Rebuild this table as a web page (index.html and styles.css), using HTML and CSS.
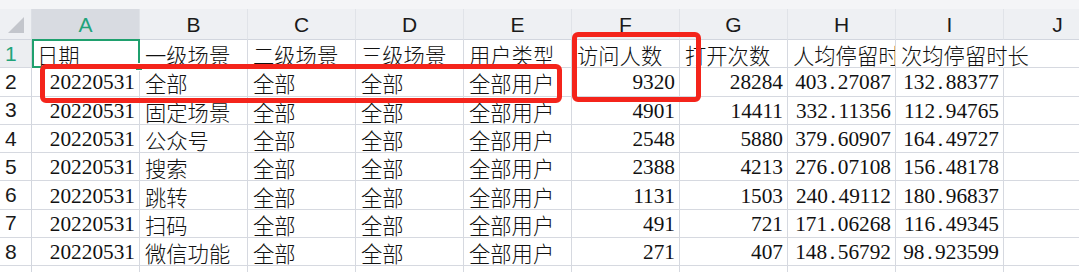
FILE: index.html
```html
<!DOCTYPE html>
<html lang="zh-CN">
<head>
<meta charset="utf-8">
<title>Sheet</title>
<link rel="stylesheet" href="styles.css">
</head>
<body>
<div class="sheet">
  <div class="topstrip"></div>
  <div class="grid">
    <div class="corner"><span class="tri"></span></div>
    <div class="ch sel">A</div>
    <div class="ch">B</div>
    <div class="ch">C</div>
    <div class="ch">D</div>
    <div class="ch">E</div>
    <div class="ch">F</div>
    <div class="ch">G</div>
    <div class="ch">H</div>
    <div class="ch">I</div>
    <div class="ch">J</div>

    <div class="rh selrow">1</div>
    <div class="c active">日期<span class="handle"></span></div>
    <div class="c">一级场景</div>
    <div class="c">二级场景</div>
    <div class="c">三级场景</div>
    <div class="c">用户类型</div>
    <div class="c">访问人数</div>
    <div class="c">打开次数</div>
    <div class="c">人均停留时长</div>
    <div class="c spill">次均停留时长</div>
    <div class="c"></div>

    <div class="rh">2</div>
    <div class="c n">20220531</div>
    <div class="c">全部</div>
    <div class="c">全部</div>
    <div class="c">全部</div>
    <div class="c">全部用户</div>
    <div class="c n">9320</div>
    <div class="c n">28284</div>
    <div class="c n">403<span class="dot">.</span>27087</div>
    <div class="c n">132<span class="dot">.</span>88377</div>
    <div class="c"></div>

    <div class="rh">3</div>
    <div class="c n">20220531</div>
    <div class="c">固定场景</div>
    <div class="c">全部</div>
    <div class="c">全部</div>
    <div class="c">全部用户</div>
    <div class="c n">4901</div>
    <div class="c n">14411</div>
    <div class="c n">332<span class="dot">.</span>11356</div>
    <div class="c n">112<span class="dot">.</span>94765</div>
    <div class="c"></div>

    <div class="rh">4</div>
    <div class="c n">20220531</div>
    <div class="c">公众号</div>
    <div class="c">全部</div>
    <div class="c">全部</div>
    <div class="c">全部用户</div>
    <div class="c n">2548</div>
    <div class="c n">5880</div>
    <div class="c n">379<span class="dot">.</span>60907</div>
    <div class="c n">164<span class="dot">.</span>49727</div>
    <div class="c"></div>

    <div class="rh">5</div>
    <div class="c n">20220531</div>
    <div class="c">搜索</div>
    <div class="c">全部</div>
    <div class="c">全部</div>
    <div class="c">全部用户</div>
    <div class="c n">2388</div>
    <div class="c n">4213</div>
    <div class="c n">276<span class="dot">.</span>07108</div>
    <div class="c n">156<span class="dot">.</span>48178</div>
    <div class="c"></div>

    <div class="rh">6</div>
    <div class="c n">20220531</div>
    <div class="c">跳转</div>
    <div class="c">全部</div>
    <div class="c">全部</div>
    <div class="c">全部用户</div>
    <div class="c n">1131</div>
    <div class="c n">1503</div>
    <div class="c n">240<span class="dot">.</span>49112</div>
    <div class="c n">180<span class="dot">.</span>96837</div>
    <div class="c"></div>

    <div class="rh">7</div>
    <div class="c n">20220531</div>
    <div class="c">扫码</div>
    <div class="c">全部</div>
    <div class="c">全部</div>
    <div class="c">全部用户</div>
    <div class="c n">491</div>
    <div class="c n">721</div>
    <div class="c n">171<span class="dot">.</span>06268</div>
    <div class="c n">116<span class="dot">.</span>49345</div>
    <div class="c"></div>

    <div class="rh">8</div>
    <div class="c n">20220531</div>
    <div class="c">微信功能</div>
    <div class="c">全部</div>
    <div class="c">全部</div>
    <div class="c">全部用户</div>
    <div class="c n">271</div>
    <div class="c n">407</div>
    <div class="c n">148<span class="dot">.</span>56792</div>
    <div class="c n">98<span class="dot">.</span>923599</div>
    <div class="c"></div>

    <div class="rh">9</div>
    <div class="c n">20220531</div>
    <div class="c">微信支付</div>
    <div class="c">全部</div>
    <div class="c">全部</div>
    <div class="c">全部用户</div>
    <div class="c n">205</div>
    <div class="c n">380</div>
    <div class="c n">120<span class="dot">.</span>51220</div>
    <div class="c n">64<span class="dot">.</span>917105</div>
    <div class="c"></div>
  </div>
  <div class="mark mark-row"></div>
  <div class="mark mark-col"></div>
</div>
</body>
</html>
```

FILE: styles.css
```css
html, body {
  margin: 0;
  padding: 0;
  overflow: hidden;
  background: #ffffff;
}

.sheet {
  position: relative;
  width: 1079px;
  height: 272px;
  overflow: hidden;
  font-family: "Liberation Serif", "Noto Sans CJK SC", serif;
  color: #111111;
}

.topstrip {
  height: 9px;
  background: #f4f5f7;
}

.grid {
  display: grid;
  grid-template-columns: 32px repeat(10, 108px);
  grid-template-rows: 31px repeat(9, 28.3px);
  width: 1114px;
}

.corner {
  position: relative;
  background: #eef0f3;
  border-right: 1px solid #dcdfe5;
  border-bottom: 1px solid #d2d6de;
  box-sizing: border-box;
}

.tri {
  position: absolute;
  right: 7px;
  bottom: 6px;
  width: 0;
  height: 0;
  border-left: 16px solid transparent;
  border-bottom: 16px solid #c3c6cc;
}

.ch {
  display: flex;
  align-items: center;
  justify-content: center;
  background: #eef0f3;
  border-right: 1px solid #e0e3e8;
  border-bottom: 1px solid #d2d6de;
  box-sizing: border-box;
  font-family: "Liberation Sans", "Noto Sans", sans-serif;
  font-size: 21px;
  color: #1a1a1a;
  padding-top: 1px;
}

.ch.sel {
  background: #d8dbe1;
  color: #21a37a;
}

.rh {
  display: flex;
  align-items: center;
  padding-left: 5px;
  background: #ffffff;
  border-right: 1px solid #d2d6de;
  border-bottom: 1px solid #d6d9e0;
  box-sizing: border-box;
  font-family: "Liberation Sans", "Noto Sans", sans-serif;
  font-size: 21px;
  color: #1a1a1a;
}

.rh.selrow {
  background: #eceef1;
  color: #21a37a;
}

.c {
  position: relative;
  display: flex;
  align-items: center;
  padding: 2px 5px 0 5px;
  border-right: 1px solid #d6d9e0;
  border-bottom: 1px solid #d6d9e0;
  box-sizing: border-box;
  font-size: 21.3px;
  font-weight: 300;
  white-space: nowrap;
  overflow: hidden;
}

.c.n {
  justify-content: flex-end;
  padding-right: 4px;
}

.c.spill {
  overflow: visible;
  border-right-color: transparent;
  z-index: 1;
}

.dot {
  display: inline-block;
  width: 0.5em;
  text-align: center;
}

.c.active {
  overflow: visible;
  z-index: 2;
}

.c.active::before {
  content: "";
  position: absolute;
  left: 0;
  top: -1px;
  right: -1px;
  bottom: -1px;
  border: 2px solid #1fa06e;
  pointer-events: none;
}

.handle {
  position: absolute;
  right: -4px;
  bottom: -4px;
  width: 6px;
  height: 6px;
  background: #1fa06e;
  border: 1px solid #ffffff;
}

.mark {
  position: absolute;
  box-sizing: border-box;
  border: 5px solid #f4241b;
  border-radius: 6px;
  z-index: 5;
}

.mark-row {
  left: 40px;
  top: 64px;
  width: 522px;
  height: 39px;
}

.mark-col {
  left: 572px;
  top: 32px;
  width: 129px;
  height: 70px;
}
```
